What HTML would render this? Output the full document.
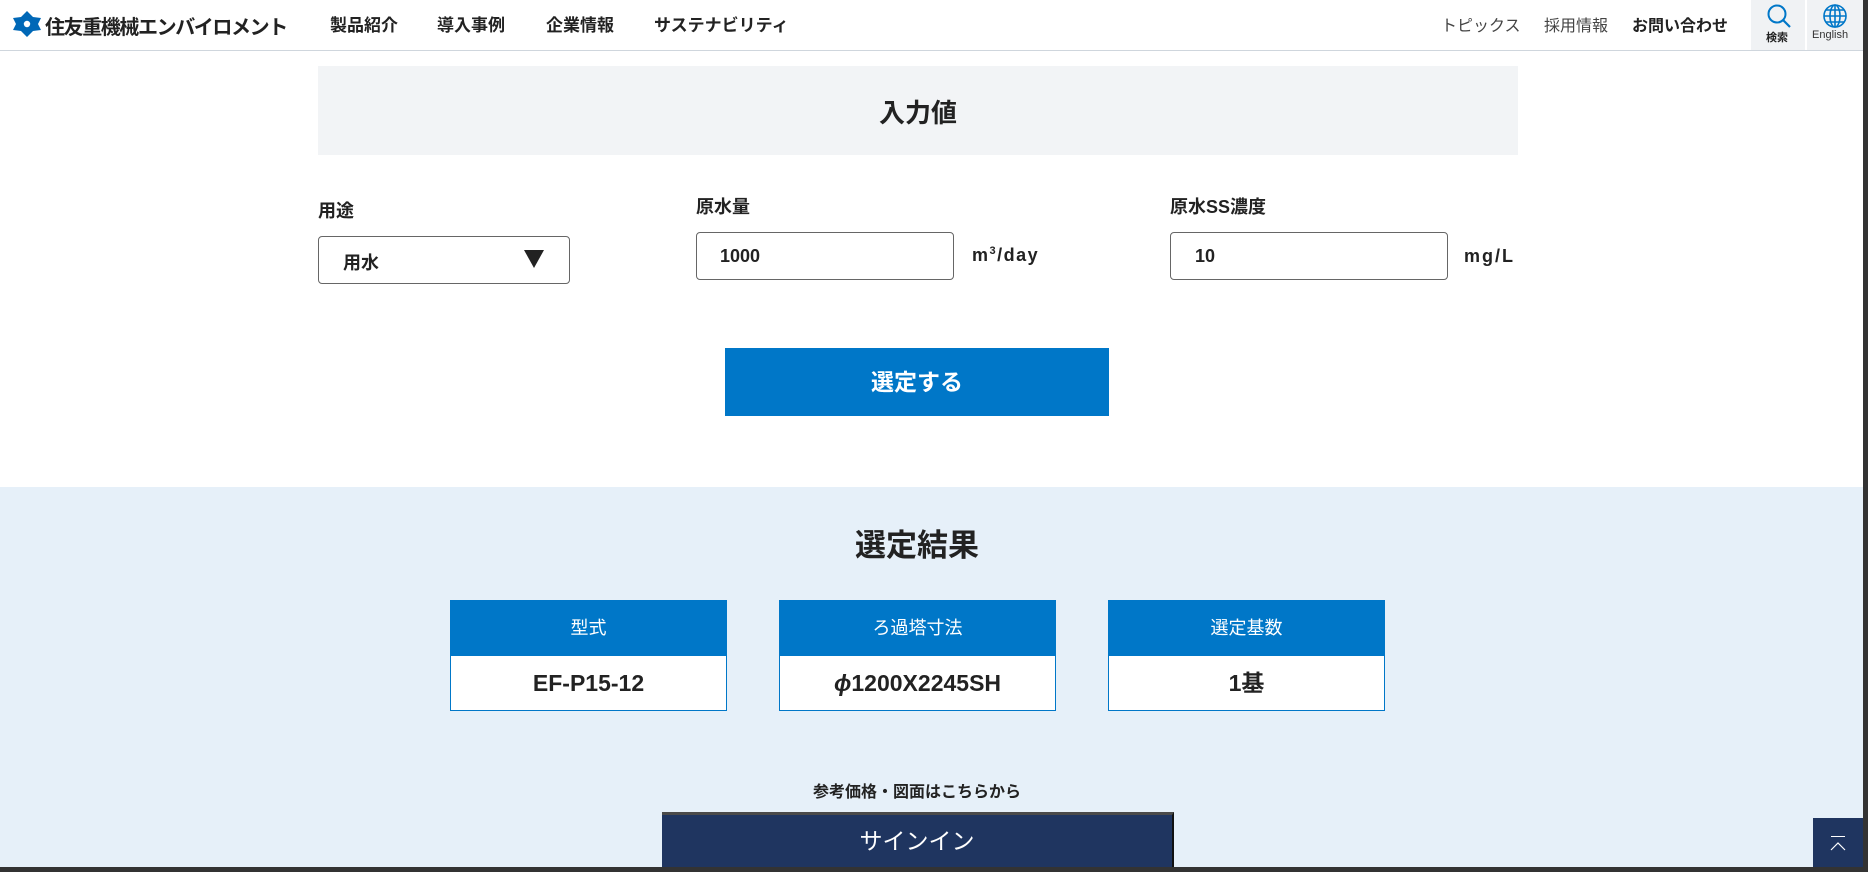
<!DOCTYPE html>
<html><head><meta charset="utf-8"><style>
*{margin:0;padding:0;box-sizing:border-box}
body{width:1868px;height:872px;overflow:hidden;background:#fff;font-family:"Liberation Sans","Noto Sans CJK JP",sans-serif;color:#222;position:relative}
.a{position:absolute;white-space:nowrap}
.hdr{position:absolute;left:0;top:0;width:1868px;height:51px;border-bottom:1px solid #cfd6dd;background:#fff}
.nav{font-size:17px;font-weight:bold;top:11px}
.box{position:absolute;border:1px solid #666;border-radius:4px;background:#fff}
.card{position:absolute;top:600px;width:277px;height:111px;border:1px solid #0077c8;background:#fff}
.card .h{height:55px;background:#0077c8;color:#fff;font-size:18px;text-align:center;line-height:55px}
.card .v{text-align:center;font-size:23px;font-weight:bold;line-height:54px}
</style></head><body>
<div class="hdr"></div>
<svg class="a" style="left:11px;top:10px" width="32" height="28" viewBox="0 0 32 28"><path d="M16 1 L22 7 L30 8 L27 14 L30 20 L22 21 L16 27 L10 21 L2 20 L5 14 L2 8 L10 7 Z" fill="#0068b7"/><circle cx="16" cy="14" r="3.2" fill="#fff"/></svg>
<div class="a" style="left:45px;top:11px;font-size:20px;font-weight:bold;color:#222;letter-spacing:-1.4px">住友重機械エンバイロメント</div>
<div class="a nav" style="left:330px">製品紹介</div>
<div class="a nav" style="left:437px">導入事例</div>
<div class="a nav" style="left:546px">企業情報</div>
<div class="a nav" style="left:654px">サステナビリティ</div>
<div class="a" style="left:1441px;top:12px;font-size:16px;color:#444">トピックス</div>
<div class="a" style="left:1544px;top:12px;font-size:16px;color:#444">採用情報</div>
<div class="a" style="left:1632px;top:12px;font-size:16px;font-weight:bold">お問い合わせ</div>
<div class="a" style="left:1751px;top:0;width:54px;height:50px;background:#f0f2f4"></div>
<div class="a" style="left:1807px;top:0;width:56px;height:50px;background:#f0f2f4"></div>
<svg class="a" style="left:1766px;top:3px" width="26" height="26" viewBox="0 0 26 26"><circle cx="11" cy="11" r="8.5" fill="none" stroke="#0077c8" stroke-width="2"/><line x1="17" y1="17" x2="24" y2="24" stroke="#0077c8" stroke-width="2.2"/></svg>
<div class="a" style="left:1766px;top:29px;font-size:11px;font-weight:bold">検索</div>
<svg class="a" style="left:1822px;top:3px" width="26" height="26" viewBox="0 0 26 26"><g fill="none" stroke="#0077c8" stroke-width="1.6"><circle cx="13" cy="13" r="11"/><ellipse cx="13" cy="13" rx="5" ry="11"/><line x1="2" y1="13" x2="24" y2="13"/><line x1="13" y1="2" x2="13" y2="24"/><path d="M4 7 H22 M4 19 H22"/></g></svg>
<div class="a" style="left:1812px;top:29px;font-size:11px;color:#333">English</div>

<div class="a" style="left:318px;top:66px;width:1200px;height:89px;background:#f2f4f6"></div>
<div class="a" style="left:318px;top:93px;width:1200px;text-align:center;font-size:26px;font-weight:bold">入力値</div>

<div class="a" style="left:318px;top:197px;font-size:18px;font-weight:bold">用途</div>
<div class="a" style="left:696px;top:193px;font-size:18px;font-weight:bold">原水量</div>
<div class="a" style="left:1170px;top:193px;font-size:18px;font-weight:bold">原水SS濃度</div>
<div class="box" style="left:318px;top:236px;width:252px;height:48px"></div>
<div class="a" style="left:343px;top:249px;font-size:18px;font-weight:bold">用水</div>
<svg class="a" style="left:524px;top:250px" width="20" height="18"><path d="M0 0 H20 L10 18 Z" fill="#222"/></svg>
<div class="box" style="left:696px;top:232px;width:258px;height:48px"></div>
<div class="a" style="left:720px;top:246px;font-size:18px;font-weight:bold">1000</div>
<div class="a" style="left:972px;top:245px;font-size:18px;font-weight:bold;letter-spacing:1.5px">m<sup style="font-size:11px">3</sup>/day</div>
<div class="box" style="left:1170px;top:232px;width:278px;height:48px"></div>
<div class="a" style="left:1195px;top:246px;font-size:18px;font-weight:bold">10</div>
<div class="a" style="left:1464px;top:246px;font-size:18px;font-weight:bold;letter-spacing:2px">mg/L</div>

<div class="a" style="left:725px;top:348px;width:384px;height:68px;background:#0077c8;color:#fff;font-size:23px;font-weight:bold;text-align:center;line-height:68px">選定する</div>

<div class="a" style="left:0;top:487px;width:1863px;height:380px;background:#e6f0f9"></div>
<div class="a" style="left:0;top:520px;width:1834px;text-align:center;font-size:31px;font-weight:bold">選定結果</div>
<div class="card" style="left:450px"><div class="h">型式</div><div class="v">EF-P15-12</div></div>
<div class="card" style="left:779px"><div class="h">ろ過塔寸法</div><div class="v"><i>ϕ</i>1200X2245SH</div></div>
<div class="card" style="left:1108px"><div class="h">選定基数</div><div class="v">1基</div></div>
<div class="a" style="left:0;top:778px;width:1834px;text-align:center;font-size:16px;font-weight:bold">参考価格・図面はこちらから</div>
<div class="a" style="left:662px;top:812px;width:512px;height:55px;background:#1f3560;border-top:3px solid #4a4a4a;border-right:2px solid #111;color:#fff;font-size:23px;text-align:center;line-height:52px">サインイン</div>
<div class="a" style="left:1813px;top:818px;width:50px;height:49px;background:#1f3560"></div>
<div class="a" style="left:1831px;top:836px;width:14px;height:1px;background:#fff"></div>
<svg class="a" style="left:1830px;top:841px" width="16" height="10"><path d="M1 9 L8 2 L15 9" fill="none" stroke="#fff" stroke-width="1.2"/></svg>
<div class="a" style="left:1863px;top:0;width:5px;height:872px;background:#333"></div>
<div class="a" style="left:0;top:867px;width:1868px;height:5px;background:#333"></div>
</body></html>
